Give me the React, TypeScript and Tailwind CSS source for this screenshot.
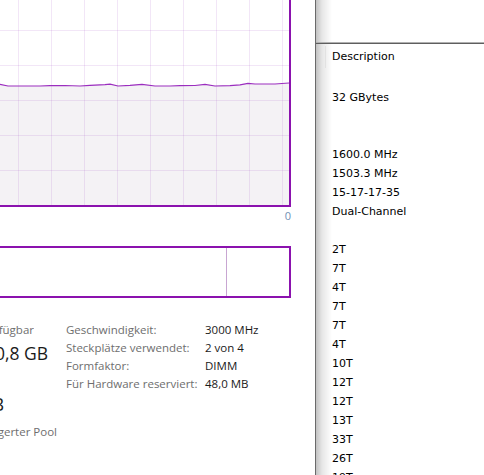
import React from "react";

const linePts: [number, number][] = [
  [0, 84.3], [8, 86], [40, 86], [50, 85.7], [65, 85.5], [80, 86], [90, 85.3], [105, 84.7],
  [110, 84.2], [118, 86], [130, 85.3], [142, 84.3], [155, 86], [170, 86], [180, 85.7],
  [195, 85.5], [205, 84.3], [215, 86], [230, 85.7], [240, 84.8], [248, 83.3], [255, 84],
  [275, 84], [289, 83],
];

function Graph() {
  const pts = linePts.map((p) => p.join(",")).join(" ");
  const vx = [18, 51, 84, 117, 150, 183, 216, 249, 282];
  const hy = [30, 65, 100, 135, 170];
  return (
    <svg width="289" height="205" className="block">
      <polygon points={`${pts} 289,205 0,205`} fill="#f4f2f5" />
      {vx.map((x) => (
        <line key={"v" + x} x1={x + 0.5} y1={0} x2={x + 0.5} y2={205} stroke="rgba(170,90,200,0.15)" strokeWidth={1} />
      ))}
      {hy.map((y) => (
        <line key={"h" + y} x1={0} y1={y + 0.5} x2={289} y2={y + 0.5} stroke="rgba(170,90,200,0.15)" strokeWidth={1} />
      ))}
      <polyline points={pts} fill="none" stroke="#9b2ebf" strokeWidth={1.2} />
    </svg>
  );
}

const stats: [string, string][] = [
  ["Geschwindigkeit:", "3000 MHz"],
  ["Steckplätze verwendet:", "2 von 4"],
  ["Formfaktor:", "DIMM"],
  ["Für Hardware reserviert:", "48,0 MB"],
];

const rows: string[] = [
  "",
  "32 GBytes",
  "",
  "",
  "1600.0 MHz",
  "1503.3 MHz",
  "15-17-17-35",
  "Dual-Channel",
  "",
  "2T",
  "7T",
  "4T",
  "7T",
  "7T",
  "4T",
  "10T",
  "12T",
  "12T",
  "13T",
  "33T",
  "26T",
  "19T",
];

export default function App() {
  return (
    <div
      className="w-[484px] h-[475px] overflow-hidden bg-white flex"
      style={{ fontFamily: '"Segoe UI", "Open Sans", sans-serif' }}
    >
      {/* Left panel */}
      <div className="w-[315px] shrink-0 flex flex-col">
        <div className="w-[291px] h-[207px] border-r-2 border-b-2 border-[#8b12ae] overflow-hidden">
          <Graph />
        </div>
        <div className="w-[291px] h-[16px] mt-[1px] text-right text-[11px] leading-[16px] text-[#7090b5]">0</div>
        <div className="w-[291px] h-[52px] mt-[22px] border-t-2 border-r-2 border-b-2 border-[#8b12ae] flex">
          <div className="w-[227px] h-full border-r border-[#c8a6d2]" />
          <div className="flex-1" />
        </div>
        <div className="mt-[23px] flex items-start">
          <div className="w-[66px] shrink-0 flex flex-col">
            <div className="w-[34px] h-[18px] flex justify-end overflow-hidden whitespace-nowrap text-[11.5px] leading-[18px] text-[#6e6e6e]">
              Verfügbar
            </div>
            <div className="w-[48px] h-[26px] mt-[1px] flex justify-end overflow-hidden whitespace-nowrap text-[17.5px] leading-[26px] text-[#1a1a1a]">
              20,8 GB
            </div>
            <div className="w-[4px] h-[26px] mt-[25px] flex justify-end overflow-hidden whitespace-nowrap text-[17.5px] leading-[26px] text-[#1a1a1a]">
              GB
            </div>
            <div className="w-[57px] h-[18px] mt-[6px] flex justify-end overflow-hidden whitespace-nowrap text-[11.5px] leading-[18px] text-[#6e6e6e]">
              Nicht ausgelagerter Pool
            </div>
          </div>
          <div className="grid grid-cols-[139px_auto] content-start text-[11.5px] leading-[18px]">
            {stats.map(([k, v]) => (
              <React.Fragment key={k}>
                <div className="h-[18px] text-[#6e6e6e] whitespace-nowrap">{k}</div>
                <div className="h-[18px] text-[#1a1a1a] whitespace-nowrap">{v}</div>
              </React.Fragment>
            ))}
          </div>
        </div>
      </div>

      {/* Right panel */}
      <div
        className="flex-1 h-full border-l border-[#6a6a6a] bg-[linear-gradient(to_right,#c2c2c2_0px,#e6e6e6_6px,#ffffff_16px)] flex flex-col text-[11px] text-black"
        style={{ fontFamily: '"DejaVu Sans", Verdana, sans-serif' }}
      >
        <div className="h-[42px] shrink-0" />
        <div className="h-px bg-[#b0b0b0] shrink-0" />
        <div className="h-px bg-[#5e5e5e] shrink-0" />
        <div className="h-[25px] shrink-0 flex items-center pl-[9px]">
          <div className="w-px h-[22px] bg-[#e2e2e2]" />
          <div className="ml-[6px] leading-[25px]">Description</div>
        </div>
        <div className="flex flex-col pl-[16px]">
          {rows.map((r, i) => (
            <div key={i} className="h-[19px] leading-[19px] whitespace-nowrap">
              {r}
            </div>
          ))}
        </div>
      </div>
    </div>
  );
}
